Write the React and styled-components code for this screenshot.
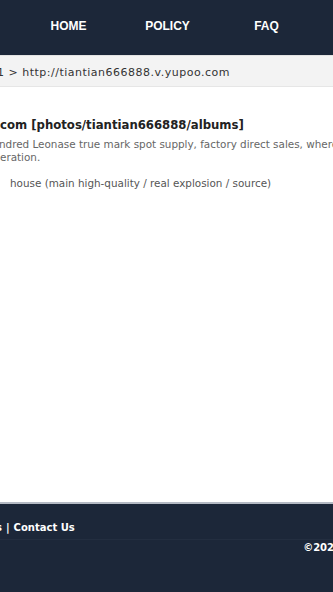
import React from 'react'
import styled, { createGlobalStyle } from 'styled-components'

const navy = '#1c2739'

const GlobalStyle = createGlobalStyle`
  html, body {
    margin: 0;
    padding: 0;
    background: #fff;
    overflow: hidden;
  }
`

const Page = styled.div`
  width: 333px;
  height: 592px;
  display: flex;
  flex-direction: column;
  overflow: hidden;
  font-family: 'DejaVu Sans', Verdana, sans-serif;
`

const Header = styled.header`
  height: 55px;
  flex-shrink: 0;
  background: ${navy};
  display: flex;
  align-items: center;
  padding-left: 19px;
`

const NavLink = styled.a`
  width: 99px;
  text-align: center;
  color: #fff;
  font-family: 'Liberation Sans', Arial, sans-serif;
  font-weight: 700;
  font-size: 12px;
  text-decoration: none;
  margin-top: -3px;
`

const Crumbs = styled.div`
  height: 32px;
  flex-shrink: 0;
  background: #f3f3f3;
  border-top: 1px solid #e2e2e2;
  border-bottom: 1px solid #e6e6e6;
  display: flex;
  align-items: center;
  font-size: 11px;
  letter-spacing: 0.5px;
  color: #333;
  white-space: nowrap;
  padding-top: 2px;
  box-sizing: border-box;
`

const CrumbText = styled.span`
  margin-left: -3px;
`

const Main = styled.main`
  flex: 1;
  padding-top: 31px;
  white-space: nowrap;
`

const Title = styled.h1`
  margin: 0 0 6px;
  font-size: 11.7px;
  font-weight: 700;
  color: #222;
`

const Desc = styled.p`
  margin: 0;
  font-size: 10.4px;
  line-height: 13px;
  color: #666;
  margin-left: ${({ indent }) => indent || 0}px;
`

const Note = styled.p`
  margin: 13px 0 0 10px;
  font-size: 10.4px;
  color: #555;
`

const Footer = styled.footer`
  height: 90px;
  flex-shrink: 0;
  background: ${navy};
  border-top: 2px solid #b4bac4;
  box-sizing: border-box;
  color: #fff;
  font-size: 10px;
  font-weight: 700;
  display: flex;
  flex-direction: column;
`

const FooterLinks = styled.div`
  height: 36px;
  display: flex;
  align-items: center;
  gap: 4px;
  padding-top: 11px;
  box-sizing: border-box;
  margin-left: -4px;
  border-bottom: 1px solid #232e40;
  white-space: nowrap;
`

const FooterLink = styled.a`
  color: #fff;
  text-decoration: none;
`

const Copy = styled.div`
  display: flex;
  justify-content: flex-end;
  padding-top: 2px;
  margin-right: -8px;
  white-space: nowrap;
`

export default function App() {
  return (
    <Page>
      <GlobalStyle />
      <Header>
        <NavLink href="#">HOME</NavLink>
        <NavLink href="#">POLICY</NavLink>
        <NavLink href="#">FAQ</NavLink>
      </Header>
      <Crumbs>
        <CrumbText>1 &gt; http://tiantian666888.v.yupoo.com</CrumbText>
      </Crumbs>
      <Main>
        <Title>com [photos/tiantian666888/albums]</Title>
        <Desc indent={-1}>ndred Leonase true mark spot supply, factory direct sales, where</Desc>
        <Desc>eration.</Desc>
        <Note>house (main high-quality / real explosion / source)</Note>
      </Main>
      <Footer>
        <FooterLinks>
          <FooterLink href="#">s</FooterLink>
          <span>|</span>
          <FooterLink href="#">Contact Us</FooterLink>
        </FooterLinks>
        <Copy>©2023</Copy>
      </Footer>
    </Page>
  )
}
